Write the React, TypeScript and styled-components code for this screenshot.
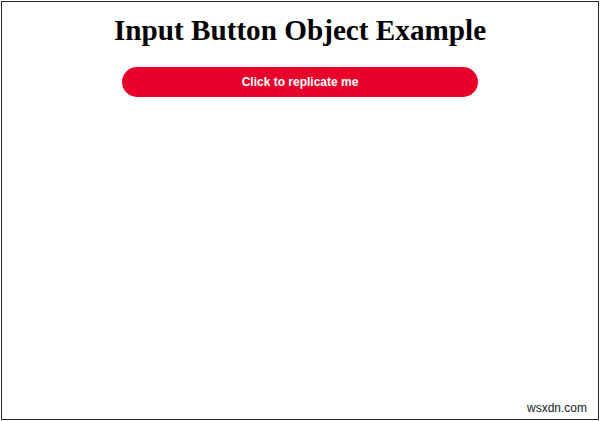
import styled, { createGlobalStyle } from "styled-components";

const GlobalStyle = createGlobalStyle`
  html, body {
    margin: 0;
    padding: 0;
    background: #ffffff;
  }
`;

const Frame = styled.div`
  box-sizing: border-box;
  width: 598px;
  height: 419px;
  margin: 1px 0 0 1px;
  border: 1.5px solid #2a2a2a;
  background: #ffffff;
  position: relative;
  display: flex;
  flex-direction: column;
  align-items: center;
`;

const Title = styled.h1`
  margin: 10.5px 0 0;
  font-family: "Liberation Serif", "Times New Roman", serif;
  font-weight: bold;
  font-size: 29.2px;
  line-height: 34px;
  color: #000;
`;

const ReplicateButton = styled.button`
  margin-top: 20px;
  width: 356px;
  height: 30px;
  border: none;
  border-radius: 15px;
  background: #e8002b;
  color: #ffffff;
  font-family: "Liberation Sans", Arial, sans-serif;
  font-weight: bold;
  font-size: 12px;
  cursor: pointer;
`;

const Watermark = styled.span`
  position: absolute;
  right: 11px;
  bottom: 4px;
  font-family: "Liberation Sans", Arial, sans-serif;
  font-size: 12px;
  color: #1a1a1a;
`;

function App() {
  return (
    <>
      <GlobalStyle />
      <Frame>
        <Title>Input Button Object Example</Title>
        <ReplicateButton type="button">Click to replicate me</ReplicateButton>
        <Watermark>wsxdn.com</Watermark>
      </Frame>
    </>
  );
}

export default App;
